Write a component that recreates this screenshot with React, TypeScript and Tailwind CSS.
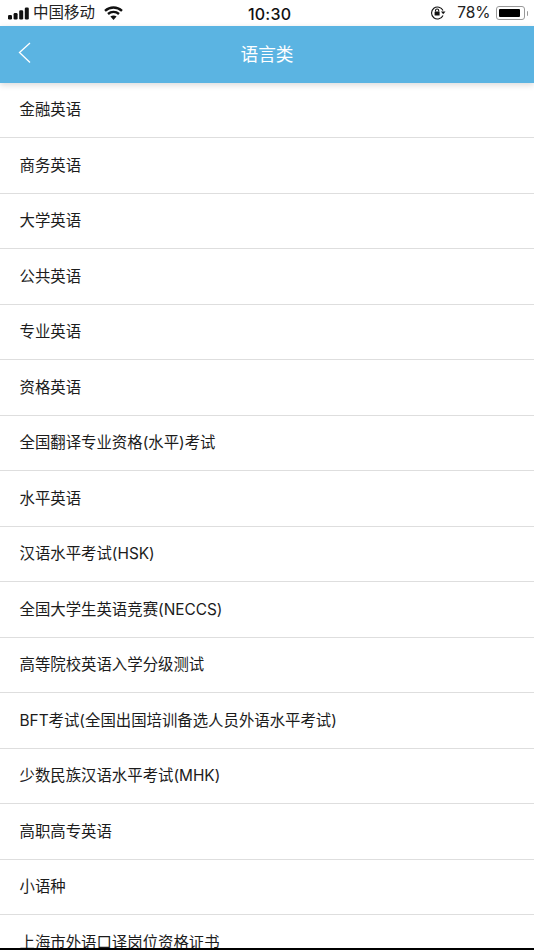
const items = [
  "金融英语",
  "商务英语",
  "大学英语",
  "公共英语",
  "专业英语",
  "资格英语",
  "全国翻译专业资格(水平)考试",
  "水平英语",
  "汉语水平考试(HSK)",
  "全国大学生英语竞赛(NECCS)",
  "高等院校英语入学分级测试",
  "BFT考试(全国出国培训备选人员外语水平考试)",
  "少数民族汉语水平考试(MHK)",
  "高职高专英语",
  "小语种",
  "上海市外语口译岗位资格证书",
];

export default function App() {
  return (
    <div className="relative flex h-[950px] w-[534px] flex-col overflow-hidden bg-white font-['Inter','Noto_Sans_CJK_SC',sans-serif] text-[#222]">
      <div className="flex h-[26px] shrink-0 items-center justify-between bg-white pl-[8px] pr-[6px]">
        <div className="flex items-center">
          <svg width="21" height="13" viewBox="0 0 21 13" fill="#111">
            <rect x="0" y="8" width="4" height="4.6" rx="1.3" />
            <rect x="5.6" y="6" width="4" height="6.6" rx="1.3" />
            <rect x="11.2" y="3.2" width="4" height="9.4" rx="1.3" />
            <rect x="16.8" y="0.4" width="4" height="12.2" rx="1.3" />
          </svg>
          <span className="ml-[4px] text-[15.5px] leading-none text-[#222]">中国移动</span>
          <svg className="ml-[9px]" width="19" height="14" viewBox="0 0 19 14" fill="none" stroke="#111" strokeWidth="2.4">
            <path d="M1 4.8 C6 0.4 13 0.4 18 4.8" />
            <path d="M4 8 C7.2 5.2 11.8 5.2 15 8" />
            <path d="M9.5 14 L6.4 10.6 C8.2 9.2 10.8 9.2 12.6 10.6 Z" fill="#111" stroke="none" />
          </svg>
        </div>
        <div className="absolute left-[248px] top-[5px] text-[16px] font-medium leading-[18px] tracking-[0.2px] text-[#111]">10:30</div>
        <div className="flex items-center">
          <svg width="16" height="14" viewBox="0 0 16 14" fill="none" stroke="#111" strokeWidth="1.1">
            <path d="M13 9.5 A6 6 0 1 1 13 4.5" />
            <path d="M11 5.5 L15.5 5.5 L13.2 8.2 Z" fill="#111" stroke="none" />
            <rect x="4.6" y="5.6" width="5" height="4" rx="0.5" fill="#111" stroke="none" />
            <path d="M5.5 5.6 V4.6 A1.6 1.6 0 0 1 8.7 4.6 V5.6" />
          </svg>
          <span className="ml-[11px] text-[15.5px] leading-none text-[#222]">78%</span>
          <div className="ml-[5px] flex items-center">
            <div className="flex h-[14px] w-[29px] items-center rounded-[3px] border border-[#999] p-[2px]">
              <div className="h-full w-[21px] rounded-[1px] bg-black" />
            </div>
            <div className="ml-[2px] h-[5px] w-[1.5px] rounded-r bg-[#999]" />
          </div>
        </div>
      </div>

      <div className="relative z-10 flex h-[57px] shrink-0 items-center justify-center bg-[#5bb4e2] shadow-[0_2px_6px_rgba(0,0,0,0.15)]">
        <svg className="absolute left-[18px] top-[16px]" width="14" height="21" viewBox="0 0 14 21" fill="none" stroke="white" strokeWidth="1.3">
          <path d="M12 1 L1.5 10.5 L12 20.5" />
        </svg>
        <span className="text-[17.7px] leading-none text-white">语言类</span>
      </div>

      <div className="-mt-[0.5px] flex flex-col">
        {items.map((t) => (
          <div key={t} className="flex h-[55.5px] shrink-0 items-center border-b border-[#dedede] pl-[19.5px] text-[15.4px] leading-none text-[#1c1c1c]">
            {t}
          </div>
        ))}
      </div>

      <div className="absolute bottom-0 left-0 h-[2px] w-full bg-black" />
    </div>
  );
}
